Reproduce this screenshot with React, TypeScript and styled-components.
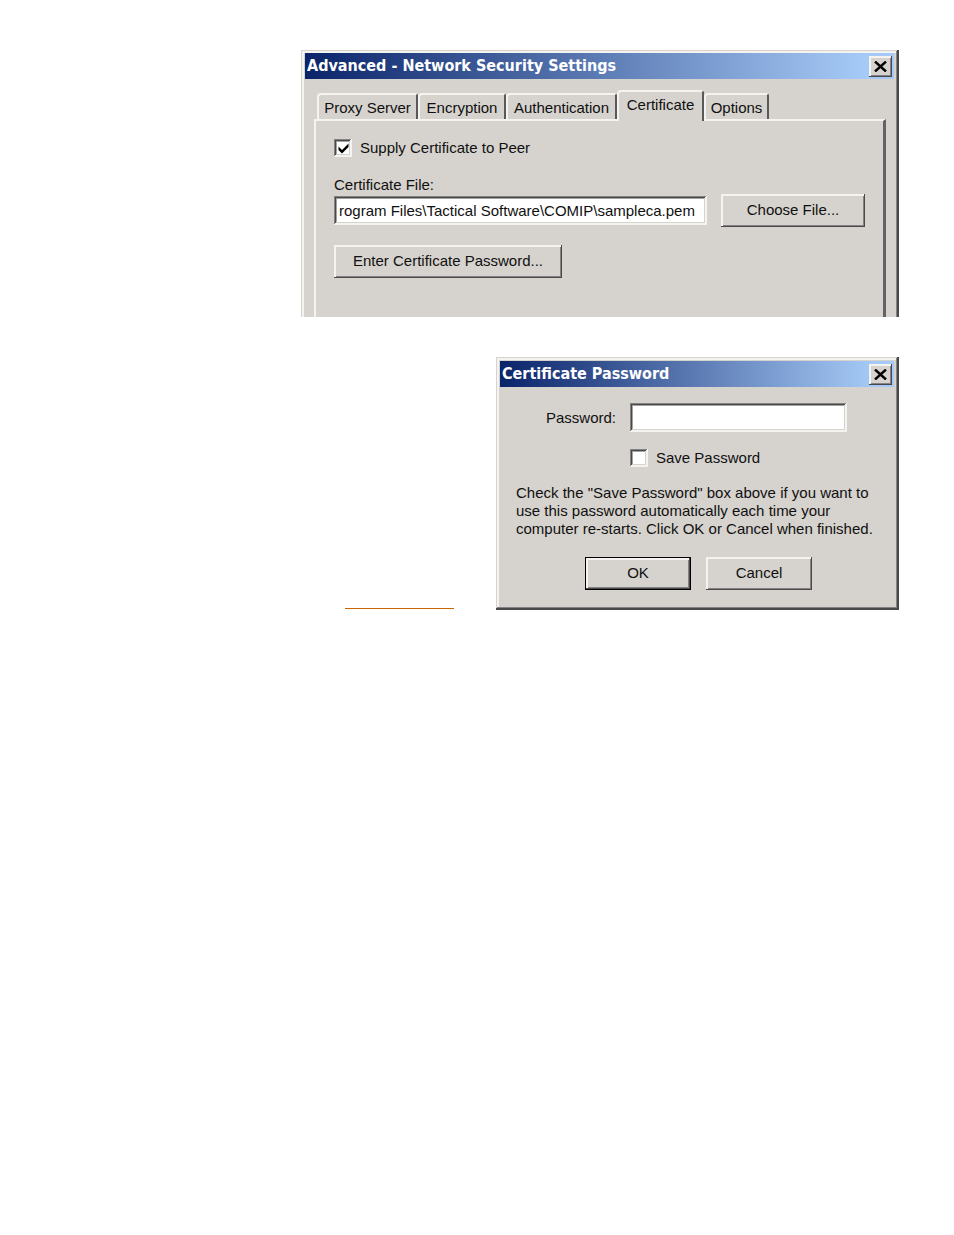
import React from "react";
import styled, { createGlobalStyle, css } from "styled-components";

const face = "#d6d3ce";
const light = "#f4f3f0";
const shadow = "#848284";
const dark = "#4a494a";

const GlobalStyle = createGlobalStyle`
  *, *::before, *::after { box-sizing: border-box; }
  body { margin: 0; background: #fff; }
`;

const raised = css`
  border: 0;
  box-shadow: inset -1px -1px ${dark}, inset 2px 2px ${light}, inset -2px -2px ${shadow};
`;

const sunken = css`
  border: 0;
  box-shadow: inset -1px -1px ${light}, inset 1px 1px ${shadow}, inset -2px -2px ${light},
    inset 2px 2px ${dark}, inset -3px -3px ${face}, inset 3px 3px #a5a3a0;
`;

const Page = styled.main`
  display: flex;
  flex-direction: column;
  gap: 40px;
  padding: 50px 55px 40px 301px;
  font-family: "Liberation Sans", Arial, sans-serif;
  font-size: 15px;
  line-height: 18px;
  color: #101010;
`;

const Row = styled.div`
  display: flex;
  align-items: flex-end;
  justify-content: flex-end;
  gap: 42px;
`;

const BlankLink = styled.a`
  width: 109px;
  height: 18px;
  margin-bottom: 1px;
  border-bottom: 1px solid #cc6600;
  color: #cc6600;
`;

const Dialog = styled.section<{ $open?: boolean; $width?: number }>`
  display: flex;
  flex-direction: column;
  width: ${(p) => (p.$width ? `${p.$width}px` : "100%")};
  padding: ${(p) => (p.$open ? "3px 5px 0 4px" : "4px 5px 20px 4px")};
  background: ${face};
  box-shadow: ${(p) =>
    p.$open
      ? `inset -2px 0 ${dark}, inset 1px 1px ${face}, inset -3px 0 ${shadow}, inset 3px 3px ${light}`
      : `inset -2px -2px ${dark}, inset 1px 1px ${face}, inset -3px -3px ${shadow}, inset 3px 3px ${light}`};
`;

const TitleBar = styled.header`
  display: flex;
  align-items: center;
  justify-content: space-between;
  height: 26px;
  padding: 0 2px;
  background: linear-gradient(90deg, #0a246a, #a6caf7 95%);
`;

const Title = styled.h1`
  margin: 0;
  font-family: "DejaVu Sans Condensed", "DejaVu Sans", sans-serif;
  font-stretch: condensed;
  font-size: 16px;
  font-weight: bold;
  color: #fff;
  white-space: nowrap;
`;

const CloseButton = styled.button`
  ${raised}
  display: grid;
  place-items: center;
  width: 23px;
  height: 21px;
  padding: 0;
  background-color: ${face};
`;

const Tabs = styled.div`
  display: flex;
  align-items: flex-end;
  height: 29px;
  margin: 11px 0 0 12px;
`;

const Tab = styled.button<{ $width: number; $active?: boolean }>`
  position: relative;
  z-index: ${(p) => (p.$active ? 1 : 0)};
  width: ${(p) => p.$width}px;
  height: ${(p) => (p.$active ? 31 : 26)}px;
  margin-bottom: ${(p) => (p.$active ? -2 : 0)}px;
  padding: ${(p) => (p.$active ? "0 0 3px" : "1px 0 0")};
  border: solid;
  border-width: 2px 2px 0 2px;
  border-color: ${light} #5a595a ${light} ${light};
  border-radius: 4px 3px 0 0;
  background: ${face};
  font: inherit;
  color: inherit;
  white-space: nowrap;
`;

const Panel = styled.div`
  display: flex;
  flex-direction: column;
  align-items: flex-start;
  height: 198px;
  margin: 0 8px 0 9px;
  padding: 18px 18px 0;
  border: solid;
  border-width: 2px 3px 0 2px;
  border-color: ${light} #636163 ${light} ${light};
`;

const CheckLabel = styled.label`
  display: flex;
  align-items: center;
  gap: 8px;
  height: 18px;
`;

const CheckMark = styled.span`
  display: grid;
  position: relative;
  width: 18px;
  height: 18px;

  svg {
    position: absolute;
    inset: 0;
    pointer-events: none;
  }
`;

const CheckInput = styled.input`
  ${sunken}
  appearance: none;
  width: 18px;
  height: 18px;
  margin: 0;
  background: #fff;
`;

const FieldLabel = styled.label`
  margin-top: 19px;
`;

const FileRow = styled.div`
  display: flex;
  align-items: center;
  gap: 14px;
  width: 100%;
  margin-bottom: 18px;
`;

const TextInput = styled.input`
  ${sunken}
  flex: 1;
  min-width: 0;
  height: 29px;
  padding: 0 4px 0 5px;
  background: #fff;
  font: inherit;
  color: inherit;
`;

const Button = styled.button<{ $width: number; $default?: boolean }>`
  ${raised}
  width: ${(p) => p.$width}px;
  height: 33px;
  padding: 0 0 2px;
  background: ${face};
  font: inherit;
  color: inherit;
  white-space: nowrap;
  ${(p) =>
    p.$default &&
    css`
      border: 1px solid #000;
    `}
`;

const PasswordForm = styled.div`
  display: grid;
  grid-template-columns: 116px 217px;
  column-gap: 14px;
  row-gap: 17px;
  align-items: center;
  margin-top: 16px;

  & > label:first-child { text-align: right; }
`;

const SecondColumn = styled.div`
  grid-column: 2;
`;

const Help = styled.p`
  margin: 17px 0 0 16px;
  white-space: nowrap;
`;

const Actions = styled.div`
  display: flex;
  gap: 15px;
  margin: 19px 0 0 85px;
`;

const CloseIcon = () => (
  <svg width="13" height="11" viewBox="0 0 13 11" fill="none" stroke="#000" strokeWidth="2.4" aria-hidden="true">
    <path d="M1 .5 12 10.5M12 .5 1 10.5" />
  </svg>
);

const Check = ({ id, label, checked }: { id: string; label: string; checked?: boolean }) => (
  <CheckLabel htmlFor={id}>
    <CheckMark>
      <CheckInput id={id} type="checkbox" defaultChecked={checked} />
      {checked && (
        <svg width="18" height="18" viewBox="0 0 18 18" aria-hidden="true">
          <path d="M4.5 7.5v3.5l3.5 3.5 6.5-6.5V4.5L8 11z" fill="#000" />
        </svg>
      )}
    </CheckMark>
    {label}
  </CheckLabel>
);

const tabs = [
  { label: "Proxy Server", width: 101 },
  { label: "Encryption", width: 88 },
  { label: "Authentication", width: 111 },
  { label: "Certificate", width: 87, active: true },
  { label: "Options", width: 65 },
];

export default function App() {
  return (
    <>
      <GlobalStyle />
      <Page>
        <Dialog $open>
          <TitleBar>
            <Title>Advanced - Network Security Settings</Title>
            <CloseButton aria-label="Close"><CloseIcon /></CloseButton>
          </TitleBar>
          <Tabs role="tablist">
            {tabs.map((t) => (
              <Tab key={t.label} role="tab" aria-selected={!!t.active} $width={t.width} $active={t.active}>
                {t.label}
              </Tab>
            ))}
          </Tabs>
          <Panel role="tabpanel">
            <Check id="supply" label="Supply Certificate to Peer" checked />
            <FieldLabel htmlFor="file">Certificate File:</FieldLabel>
            <FileRow>
              <TextInput id="file" defaultValue="rogram Files\Tactical Software\COMIP\sampleca.pem" />
              <Button $width={144}>Choose File...</Button>
            </FileRow>
            <Button $width={228}>Enter Certificate Password...</Button>
          </Panel>
        </Dialog>
        <Row>
          <BlankLink href="#" aria-label="More" />
          <Dialog $width={403}>
            <TitleBar>
              <Title as="h2">Certificate Password</Title>
              <CloseButton aria-label="Close"><CloseIcon /></CloseButton>
            </TitleBar>
            <PasswordForm>
              <label htmlFor="password">Password:</label>
              <TextInput id="password" type="password" />
              <SecondColumn><Check id="save" label="Save Password" /></SecondColumn>
            </PasswordForm>
            <Help>
              Check the "Save Password" box above if you want to<br />
              use this password automatically each time your<br />
              computer re-starts. Click OK or Cancel when finished.
            </Help>
            <Actions>
              <Button $width={106} $default>OK</Button>
              <Button $width={106}>Cancel</Button>
            </Actions>
          </Dialog>
        </Row>
      </Page>
    </>
  );
}
